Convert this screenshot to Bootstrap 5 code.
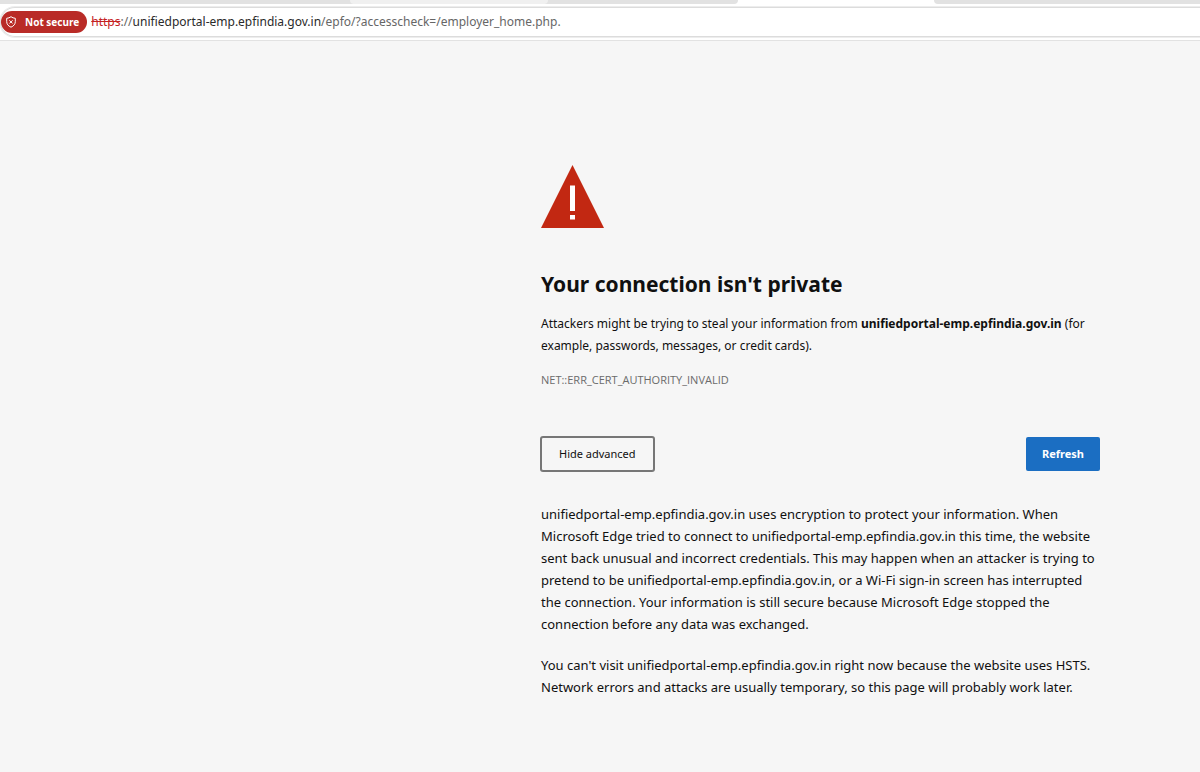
<!DOCTYPE html>
<html lang="en">
<head>
<meta charset="utf-8">
<meta name="viewport" content="width=device-width, initial-scale=1">
<title>Privacy error</title>
<link href="https://cdn.jsdelivr.net/npm/bootstrap@5.3.0/dist/css/bootstrap.min.css" rel="stylesheet">
<style>
  body { font-family: "Noto Sans", "Open Sans", sans-serif; font-size: 13px; line-height: 22px; color: #101010; background: #f6f6f6; }
  .browser-bar { background: #fff; border-bottom: 1px solid #e2e2e2; }
  .tab-strip { height: 4px; background: #e2e2e2; }
  .tab-rest { flex: 0 0 350px; }
  .tab-hover { flex: 0 0 198px; background: #f0f0f0; border-radius: 0 0 4px 4px; }
  .tab-mid { flex: 0 0 190px; background: #e2e2e2; border-bottom-right-radius: 6px; }
  .tab-open { flex: 0 0 196px; }
  .tab-last { flex: 1 1 0; background: #e2e2e2; border-bottom-left-radius: 6px; }
  .address { height: 30px; margin: 3px 0; border: solid #dcdcdc; border-width: 1px 0 1px 1px; border-radius: 15px 0 0 15px; box-shadow: 0 0 0 1px #ededed; font-size: 12px; color: #666; }
  .security { height: 22px; background: #b92b27; color: #fff; font-size: 10px; line-height: 22px; }
  .security:hover { background: #a32421; color: #fff; }
  .scheme { color: #c5221f; }
  .host { color: #2a2a2a; }
  .warning { width: 559px; max-width: calc(100% - 32px); margin: 124px 100px 32px auto; }
  h1 { font-size: 21px; line-height: 32px; margin: 40px 0 13px; }
  .summary { font-size: 12px; margin-bottom: 12px; }
  .code { font-family: "Open Sans", "Noto Sans", sans-serif; font-size: 11px; color: #6b6b6b; margin-bottom: 46px; }
  .actions { margin-bottom: 32px; }
  .action { font-size: 11px; line-height: 18px; border-radius: 2px; }
  .action-plain { padding: 7px 17px; background: #f6f6f6; color: #101010; box-shadow: 0 0 0 1px #767676; border: 1px solid #767676; }
  .action-main { padding: 8px 16px; background: #1b6ec2; color: #fff; }
  .action-main:hover { background: #185fa8; color: #fff; }
  .details p { margin-bottom: 19px; }
  @media (min-width: 761px) { .warning p { white-space: nowrap; } }
  @media (max-width: 760px) { .warning { margin-right: auto; } .warning br { display: none; } }
</style>
</head>
<body>
<header class="browser-bar">
  <div class="tab-strip d-flex bg-white">
    <div class="d-flex tab-strip">
      <div class="tab-rest"></div><div class="tab-hover"></div>
    </div>
    <div class="tab-mid"></div><div class="tab-open"></div><div class="tab-last"></div>
  </div>
  <div class="address d-flex align-items-center">
    <button type="button" class="security btn rounded-pill border-0 d-flex align-items-center fw-bold px-1 py-0 me-1">
      <svg class="me-2" width="12" height="12" viewBox="-1 0 12 12" fill="none" stroke="#fff" aria-hidden="true"><path d="M5 .7C3.700 1.700 2.300 2.200.700 2.300v3.200c0 2.700 1.500 4.500 4.300 5.700 2.800-1.200 4.300-3 4.300-5.700V2.300C7.700 2.200 6.300 1.700 5 .7zM3.400 4.300l3.200 3.200M6.600 4.300 3.400 7.500"/></svg>
      <span class="pe-1">Not secure</span>
    </button>
    <div class="text-nowrap overflow-hidden" role="textbox" aria-label="Address" tabindex="0"><s class="scheme">https</s>://<span class="host">unifiedportal-emp.epfindia.gov.in</span>/epfo/?accesscheck=/employer_home.php.</div>
  </div>
</header>
<main class="warning">
  <svg class="d-block" width="63" height="63" viewBox="0 0 63 63" role="img" aria-label="Warning"><path fill="#c22812" d="M31.500 0 63 63H0z"/><path fill="#fff" d="M29 20.500h5v25.500h-5zM29 50h5v4.500h-5z"/></svg>
  <h1 class="fw-bold">Your connection isn't private</h1>
  <p class="summary">Attackers might be trying to steal your information from <strong>unifiedportal-emp.epfindia.gov.in</strong> (for<br> example, passwords, messages, or credit cards).</p>
  <p class="code">NET::ERR_CERT_AUTHORITY_INVALID</p>
  <div class="actions d-flex justify-content-between">
    <button type="button" class="btn action action-plain">Hide advanced</button>
    <button type="button" class="btn action action-main border-0 fw-bold">Refresh</button>
  </div>
  <div class="details">
    <p>unifiedportal-emp.epfindia.gov.in uses encryption to protect your information. When<br> Microsoft Edge tried to connect to unifiedportal-emp.epfindia.gov.in this time, the website<br> sent back unusual and incorrect credentials. This may happen when an attacker is trying to<br> pretend to be unifiedportal-emp.epfindia.gov.in, or a Wi-Fi sign-in screen has interrupted<br> the connection. Your information is still secure because Microsoft Edge stopped the<br> connection before any data was exchanged.</p>
    <p>You can't visit unifiedportal-emp.epfindia.gov.in right now because the website uses HSTS.<br> Network errors and attacks are usually temporary, so this page will probably work later.</p>
  </div>
</main>
<script src="https://cdn.jsdelivr.net/npm/bootstrap@5.3.0/dist/js/bootstrap.bundle.min.js"></script>
</body>
</html>
